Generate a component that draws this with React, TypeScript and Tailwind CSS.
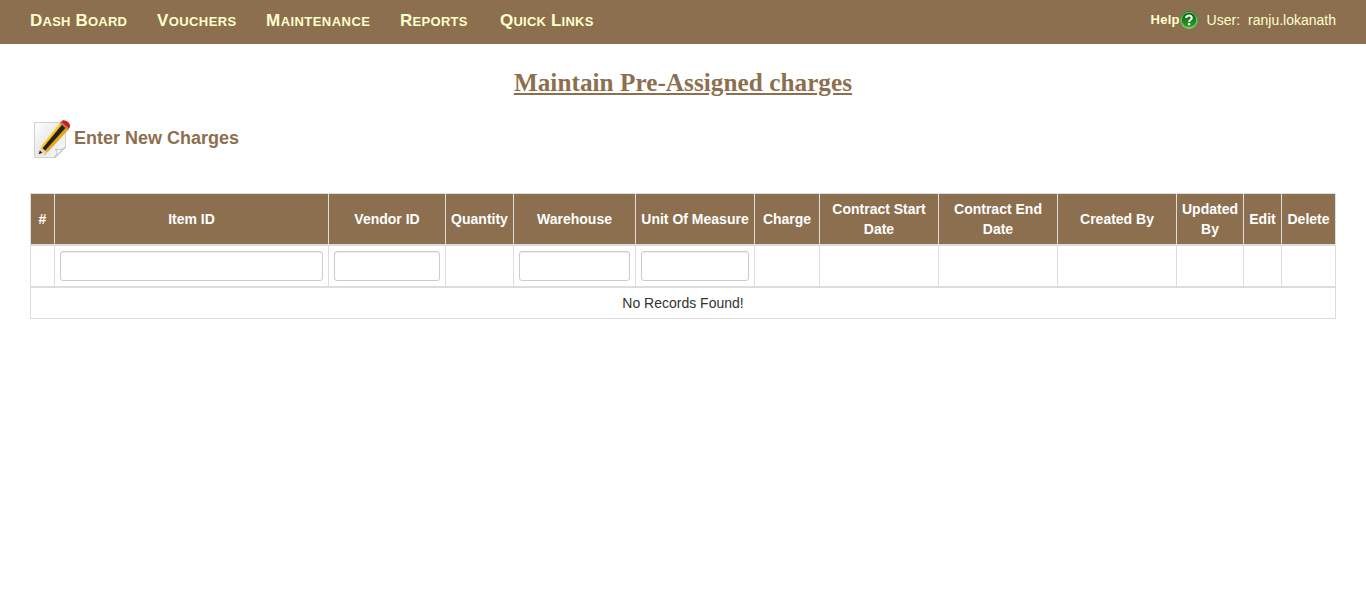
const menu = [
  { label: "Dash Board", cls: "w-[127px] tracking-[0.25px]" },
  { label: "Vouchers", cls: "w-[109px] tracking-[0.4px]" },
  { label: "Maintenance", cls: "w-[134px] tracking-[0.45px]" },
  { label: "Reports", cls: "w-[100px] tracking-[0.3px]" },
  { label: "Quick Links", cls: "w-[110px] tracking-[0.25px]" },
];

const columns = [
  { label: "#" },
  { label: "Item ID", filter: true },
  { label: "Vendor ID", filter: true },
  { label: "Quantity" },
  { label: "Warehouse", filter: true },
  { label: "Unit Of Measure", filter: true },
  { label: "Charge" },
  { label: "Contract Start Date" },
  { label: "Contract End Date" },
  { label: "Created By" },
  { label: "Updated By" },
  { label: "Edit" },
  { label: "Delete" },
];

const gridCols =
  "grid grid-cols-[24px_274px_117px_68px_122px_119px_65px_119px_119px_119px_67px_38px_54px]";

function HelpIcon() {
  return (
    <svg width="18" height="18" viewBox="0 0 18 18">
      <defs>
        <linearGradient id="ring" x1="0" y1="0" x2="0" y2="1">
          <stop offset="0" stopColor="#1f7a1f" />
          <stop offset="1" stopColor="#7fd07a" />
        </linearGradient>
        <linearGradient id="disc" x1="0" y1="0" x2="0" y2="1">
          <stop offset="0" stopColor="#0a5f0c" />
          <stop offset="1" stopColor="#2aa52a" />
        </linearGradient>
      </defs>
      <circle cx="9" cy="9" r="9" fill="url(#ring)" />
      <circle cx="9" cy="9" r="7.9" fill="#8fce8a" />
      <circle cx="9" cy="9" r="7.3" fill="url(#disc)" />
      <path d="M6.2 7.1C6.2 3.6 11.8 3.7 11.8 6.9C11.8 8.8 9.1 8.7 9.1 11" fill="none" stroke="#fff" strokeWidth="2" />
      <rect x="8" y="12" width="2.2" height="2.2" fill="#fff" />
    </svg>
  );
}

function NoteIcon() {
  return (
    <svg width="40" height="40" viewBox="0 0 40 40">
      <defs>
        <linearGradient id="paper" x1="0" y1="0" x2="1" y2="1">
          <stop offset="0" stopColor="#ffffff" />
          <stop offset="0.5" stopColor="#e9e9e9" />
          <stop offset="1" stopColor="#fafafa" />
        </linearGradient>
      </defs>
      <path d="M2.5 3.5H33.5V28L24 38.5H2.5Z" fill="url(#paper)" stroke="#d2d2d2" />
      <path d="M22 38.5C25 36 25.5 33 23.5 30C27 31.5 31 30.5 33.5 28Z" fill="#fff" stroke="#b5b5b5" strokeWidth="0.9" />
      <path d="M12 36L36 10" stroke="#aaa" strokeWidth="2" opacity="0.5" />
      <path d="M6.6 35.3L9 27.5L15 33Z" fill="#e8cf9f" />
      <path d="M6.6 35.3L7.8 31.4L10.4 33.8Z" fill="#222" />
      <path d="M9 27.5L28 4L30.8 6.2L11 29.6Z" fill="#ffc61a" />
      <path d="M10.5 29.3L30.1 5.6L34.4 9.4L13.6 32Z" fill="#222" />
      <path d="M13.2 31.5L33.7 8.7L36 10.8L15 33.2Z" fill="#eda600" />
      <path d="M28 4L30.2 1.8C33 -0.2 39.6 4.6 37.7 8.2L36 10.8Z" fill="#cf1c1c" />
      <path d="M27.8 4.3L29.2 2.7L37.2 9.3L35.8 11Z" fill="#b59a6c" opacity="0.7" />
    </svg>
  );
}

export default function App() {
  return (
    <div className="min-h-[608px] bg-white text-sm leading-5 text-[#333] [font-family:'Liberation_Sans',Arial,sans-serif]">
      <header className="flex h-11 justify-between bg-[#8c6f4f] px-[30px] pt-2.5 text-[#ffffcc]">
        <nav className="flex pt-px text-[13px] font-bold">
          {menu.map((m) => (
            <a key={m.label} href="#" className={`flex items-baseline gap-[4.7px] whitespace-nowrap ${m.cls}`}>
              {m.label.split(" ").map((word) => (
                <span key={word} className="block uppercase first-letter:text-[17px]">
                  {word}
                </span>
              ))}
            </a>
          ))}
        </nav>
        <div className="flex h-5 items-center">
          <span className="text-[13px] font-bold tracking-[0.2px]">Help</span>
          <HelpIcon />
          <span className="ml-[9px] mr-2">User:</span>
          <span>ranju.lokanath</span>
        </div>
      </header>

      <main className="px-[30px]">
        <h1 className="pt-6 text-center text-[25.2px] leading-[30px] font-bold tracking-[0.05px] text-[#8c6f4f] underline [font-family:'Liberation_Serif','Times_New_Roman',serif]">
          Maintain Pre-Assigned charges
        </h1>
        <a href="#" className="mt-[21px] flex h-10 w-fit items-start pl-[2px] text-[#8c6f4f]">
          <NoteIcon />
          <span className="ml-[2px] pt-[9px] text-lg leading-5 font-bold">Enter New Charges</span>
        </a>

        <section className="mt-[34px] w-[1306px] border-t border-l border-[#ddd]">
          <div className={`${gridCols} h-[52px] border-b-2 border-[#ddd] font-bold text-white`}>
            {columns.map((c) => (
              <div
                key={c.label}
                className="flex items-center justify-center border-r border-[#ddd] bg-[#8c6f4f] px-[5px] text-center"
              >
                {c.label}
              </div>
            ))}
          </div>
          <div className={`${gridCols} h-[42px] border-b-2 border-[#ddd]`}>
            {columns.map((c) => (
              <div key={c.label} className="border-r border-[#ddd] p-[5px]">
                {c.filter && (
                  <input
                    type="text"
                    aria-label={c.label}
                    className="block h-[30px] w-full rounded-[3px] border border-[#ccc] bg-white px-1.5 shadow-[inset_0_1px_1px_rgba(0,0,0,0.075)]"
                  />
                )}
              </div>
            ))}
          </div>
          <div className="h-[31px] border-r border-b border-[#ddd] pt-[5px] text-center">No Records Found!</div>
        </section>
      </main>
    </div>
  );
}
